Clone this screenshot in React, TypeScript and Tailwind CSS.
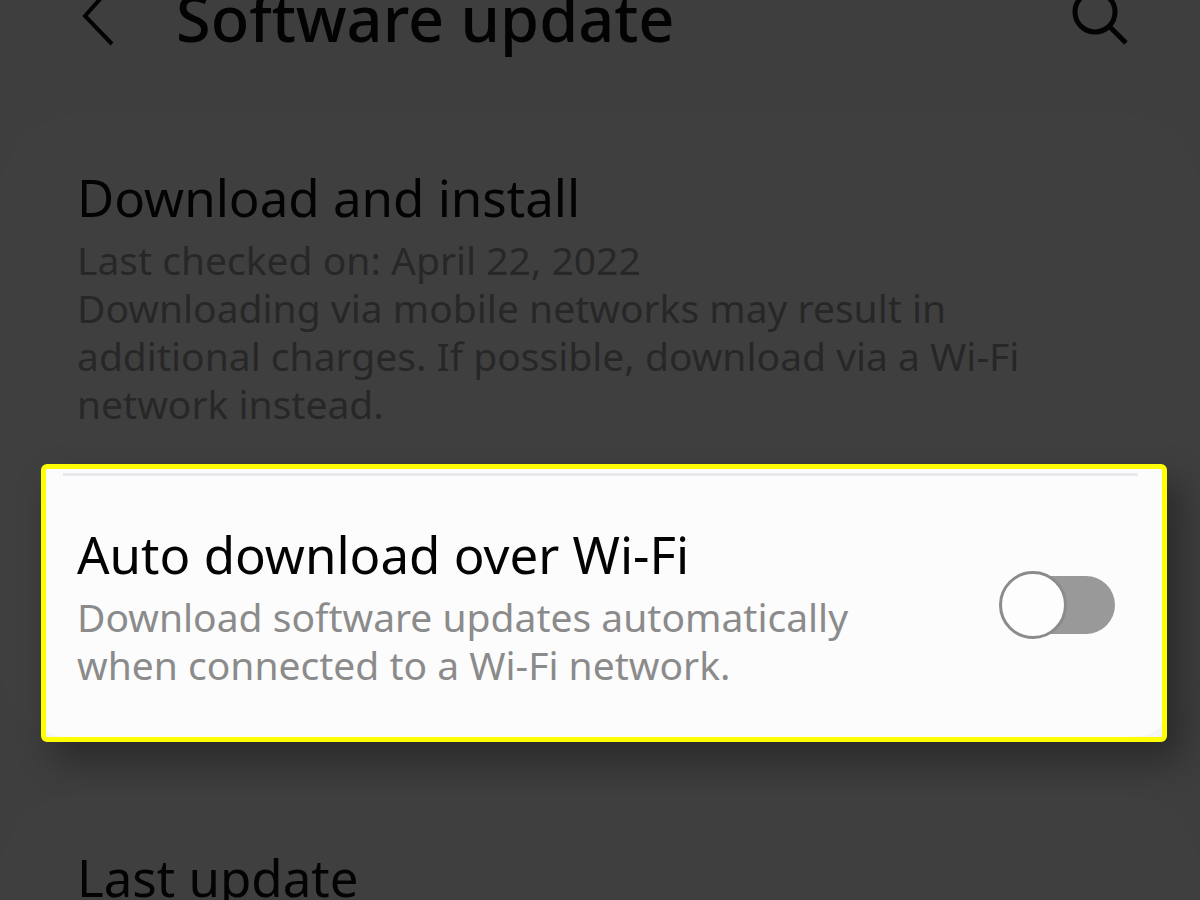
import type { ReactNode } from 'react'

interface SettingTextProps {
  title: string
  titleId?: string
  muted: string
  children?: ReactNode
}

function SettingText({ title, titleId, muted, children }: SettingTextProps) {
  return (
    <div>
      <h2 id={titleId} className="text-[51px] leading-[66px]">{title}</h2>
      {children && <p className={`mt-1.5 text-[39px] leading-[48px] ${muted}`}>{children}</p>}
    </div>
  )
}

export default function App() {
  return (
    <main className="h-screen overflow-hidden bg-[#3e3e3e] font-['Noto_Sans',sans-serif] text-[#030303]">
      <header className="flex h-[114px] items-start pr-[70px] pl-[78px]">
        <button type="button" aria-label="Back" className="h-12 w-10 shrink-0">
          <svg viewBox="0 0 40 48" className="h-12 w-10" fill="none" stroke="currentColor" strokeWidth="4" aria-hidden>
            <path d="M31 -11 7 16l27 28" />
          </svg>
        </button>
        <h1 className="-mt-6 ml-[58px] text-[63px] leading-[84px] font-medium">Software update</h1>
        <button type="button" aria-label="Search" className="ml-auto h-12 w-[60px] shrink-0">
          <svg viewBox="0 0 60 48" className="h-12 w-[60px]" fill="none" stroke="currentColor" strokeWidth="5" aria-hidden>
            <circle cx="25" cy="12" r="20" />
            <path d="m39 26 17 17" />
          </svg>
        </button>
      </header>

      <section className="rounded-[80px] bg-[#3f3f3f] pt-[50px]">
        <a href="#install" className="block px-[77px]">
          <SettingText title="Download and install" muted="text-[#272727]">
            Last checked on: April 22, 2022
            <br />
            Downloading via mobile networks may result in
            <br />
            additional charges. If possible, download via a Wi-Fi
            <br />
            network instead.
          </SettingText>
        </a>

        {/* Highlighted setting */}
        <div className="mt-9 mr-[33px] ml-[41px] rounded-[6px] border-[5px] border-[#ffff00] bg-[#f5f5f7] shadow-[14px_18px_36px_rgba(0,0,0,0.35)]">
          <div className="bg-[#fcfcfc] pt-1 [border-bottom-left-radius:20px_8px] [border-bottom-right-radius:36px_14px]">
            <hr className="mr-6 ml-[17px] h-[3px] border-0 bg-[#e9e9ee]" />
            <label className="flex items-center justify-between pt-[45px] pr-[47px] pb-12 pl-[31px]">
              <SettingText title="Auto download over Wi-Fi" titleId="auto-download" muted="text-[#8b8b8b]">
                Download software updates automatically
                <br />
                when connected to a Wi-Fi network.
              </SettingText>
              <input
                type="checkbox"
                role="switch"
                aria-labelledby="auto-download"
                className="relative h-[58px] w-[112px] shrink-0 appearance-none rounded-full bg-[#999999] before:absolute before:-top-[5px] before:-left-1 before:size-[68px] before:rounded-full before:border-[3px] before:border-[#8b8b8b] before:bg-[#fdfdfd] before:transition-transform checked:bg-[#3e91ff] checked:before:translate-x-12"
              />
            </label>
          </div>
        </div>
      </section>

      <section className="mt-[52px] rounded-t-[80px] bg-[#3f3f3f] px-[77px] pt-[50px] pb-12">
        <SettingText title="Last update" muted="text-[#272727]" />
      </section>
    </main>
  )
}
